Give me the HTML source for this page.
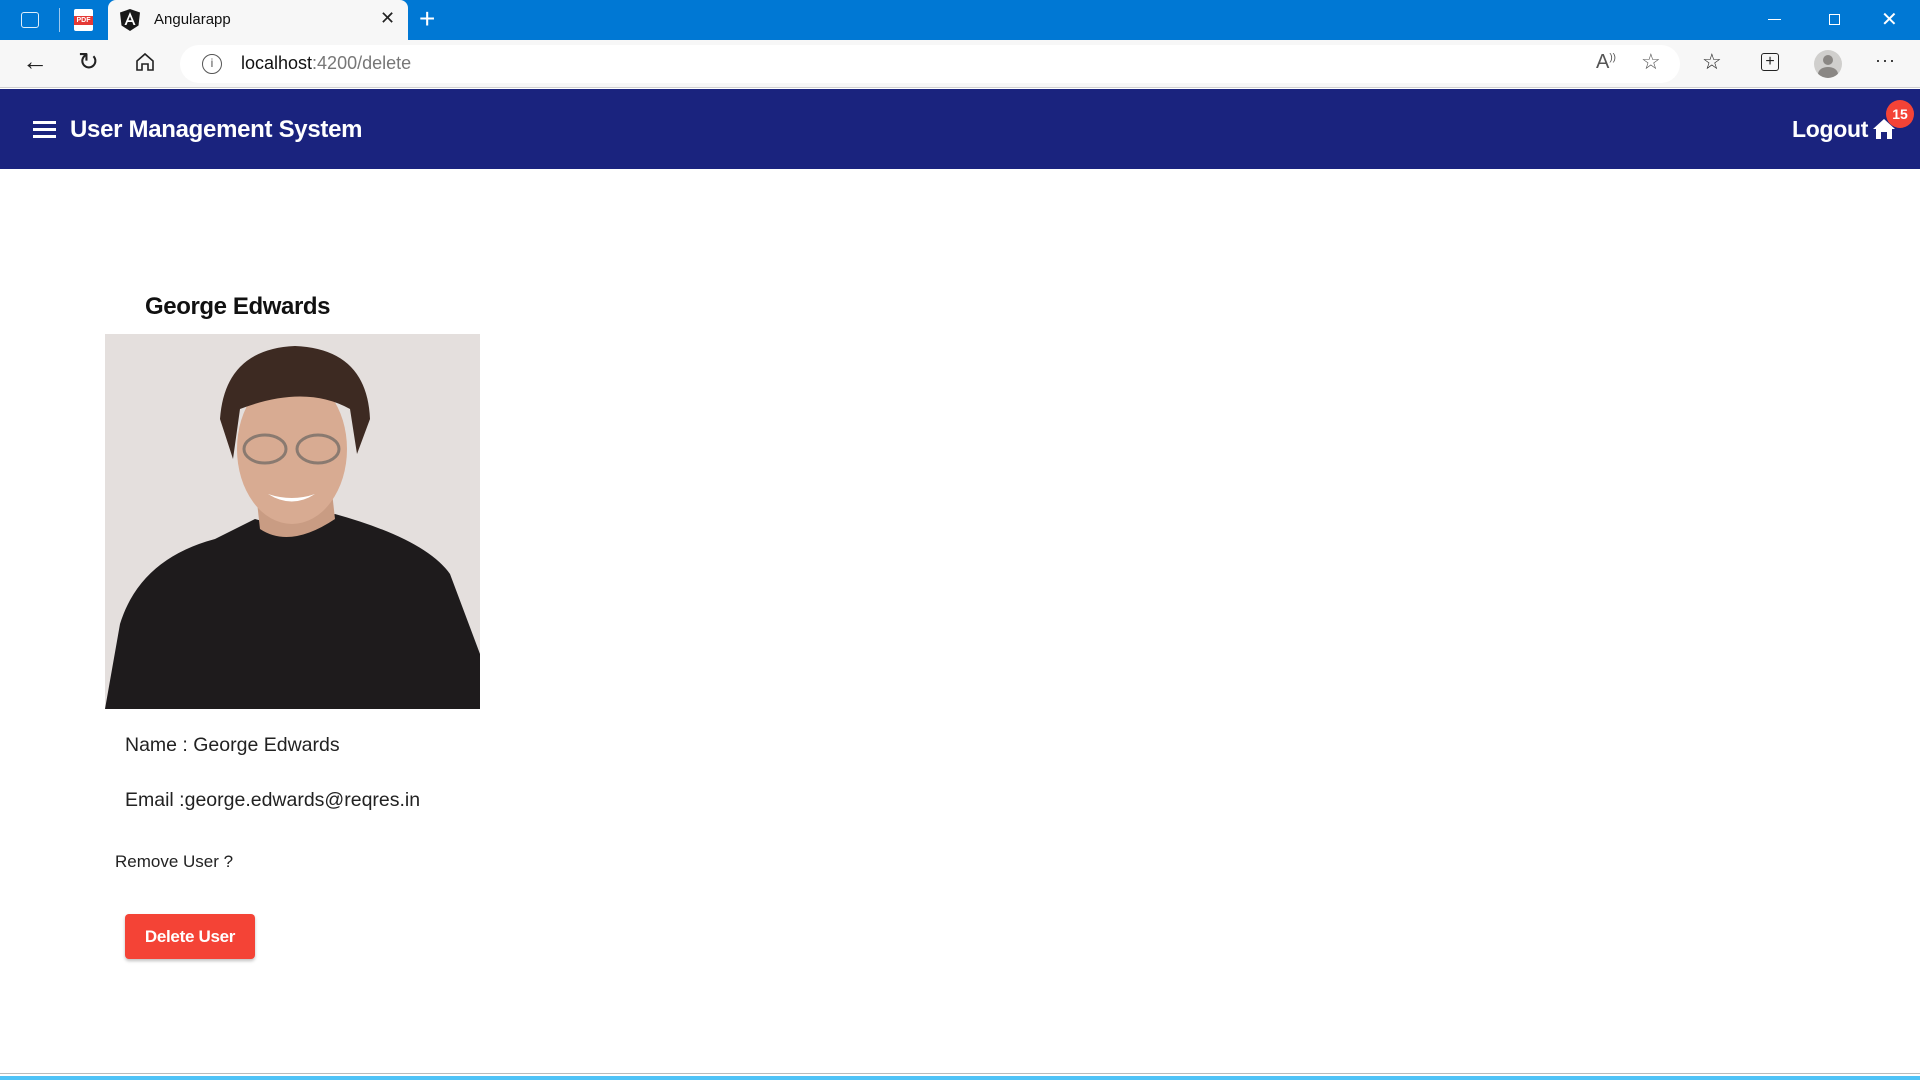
<!DOCTYPE html>
<html><head><meta charset="utf-8"><style>
*{margin:0;padding:0;box-sizing:border-box}
body{width:1920px;height:1080px;overflow:hidden;background:#fff;font-family:"Liberation Sans",sans-serif;position:relative}
.abs{position:absolute}
</style></head><body>
<div class="abs" style="left:0;top:0;width:1920px;height:40px;background:#0078d4"></div>
<div class="abs" style="left:21px;top:12px;width:18px;height:16px;border:1.5px solid #dfeefa;border-radius:3px"></div>
<div class="abs" style="left:59px;top:8px;width:1px;height:24px;background:#9cc8ee"></div>
<div class="abs" style="left:74px;top:9px;width:19px;height:22px;background:#fff;border-radius:2px"></div>
<div class="abs" style="left:74px;top:16px;width:19px;height:9px;background:#e53935;color:#fff;font-size:7px;font-weight:bold;text-align:center;line-height:9px">PDF</div>
<div class="abs" style="left:108px;top:0;width:300px;height:40px;background:#f7f7f7;border-radius:8px 8px 0 0"></div>
<svg class="abs" style="left:120px;top:9px" width="20" height="22" viewBox="0 0 20 22"><path d="M10 0 L20 3.5 L18.5 16.5 L10 22 L1.5 16.5 L0 3.5Z" fill="#1a1a1a"/><path d="M10 3 L15.5 16 H13.5 L12.3 13 H7.7 L6.5 16 H4.5Z M8.4 11.2 H11.6 L10 7.2Z" fill="#fff"/></svg>
<div class="abs" style="left:154px;top:11px;font-size:15px;color:#111">Angularapp</div>
<div class="abs" style="left:380px;top:8px;font-size:18px;color:#222">✕</div>
<div class="abs" style="left:419px;top:3px;font-size:28px;color:#fff;font-weight:300">+</div>
<div class="abs" style="left:1768px;top:19px;width:13px;height:1px;background:#fff"></div>
<div class="abs" style="left:1829px;top:14px;width:11px;height:11px;border:1px solid #fff"></div>
<div class="abs" style="left:1881px;top:7px;font-size:20px;color:#fff;font-weight:300">✕</div>
<div class="abs" style="left:0;top:40px;width:1920px;height:48px;background:#f7f7f7;border-bottom:1px solid #d0d0d0"></div>
<div class="abs" style="left:22px;top:46px;font-size:26px;color:#222">←</div>
<div class="abs" style="left:78px;top:47px;font-size:25px;color:#222">↻</div>
<svg class="abs" style="left:134px;top:51px" width="22" height="22" viewBox="0 0 22 22"><path d="M3 10 L11 3 L19 10 V19 H14 V13 H8 V19 H3Z" fill="none" stroke="#222" stroke-width="1.6"/></svg>
<div class="abs" style="left:180px;top:45px;width:1500px;height:38px;background:#fff;border-radius:19px"></div>
<div class="abs" style="left:202px;top:54px;width:20px;height:20px;border:1.5px solid #555;border-radius:50%;font-size:12px;text-align:center;line-height:17px;color:#555">i</div>
<div class="abs" style="left:241px;top:53px;font-size:18px;color:#111">localhost<span style="color:#777">:4200/delete</span></div>
<div class="abs" style="left:1596px;top:51px;font-size:20px;color:#555">A<sup style="font-size:10px">))</sup></div>
<div class="abs" style="left:1641px;top:49px;font-size:22px;color:#555">☆</div>
<div class="abs" style="left:1702px;top:49px;font-size:22px;color:#222">☆</div>
<div class="abs" style="left:1761px;top:53px;width:18px;height:18px;border:1.5px solid #222;border-radius:3px;font-size:16px;text-align:center;line-height:15px;color:#222">+</div>
<div class="abs" style="left:1814px;top:50px;width:28px;height:28px;border-radius:50%;background:#d0cfcd;overflow:hidden"><div class="abs" style="left:9px;top:5px;width:10px;height:10px;border-radius:50%;background:#8a8784"></div><div class="abs" style="left:4px;top:17px;width:20px;height:14px;border-radius:50%;background:#8a8784"></div></div>
<div class="abs" style="left:1875px;top:50px;font-size:18px;color:#222;letter-spacing:1px">···</div>
<div class="abs" style="left:0;top:89px;width:1920px;height:80px;background:#1a237e"></div>
<div class="abs" style="left:33px;top:121px;width:23px;height:3px;background:#fff;box-shadow:0 7px 0 #fff,0 14px 0 #fff"></div>
<div class="abs" style="left:70px;top:116px;font-size:24px;font-weight:bold;color:#fff;letter-spacing:-0.3px">User Management System</div>
<div class="abs" style="left:1792px;top:116px;font-size:23px;font-weight:bold;color:#fff;letter-spacing:-0.3px">Logout</div>
<svg class="abs" style="left:1872px;top:118px" width="24" height="22" viewBox="0 0 24 22"><path d="M12 1 L23 11 H20 V21 H15 V14 H9 V21 H4 V11 H1Z" fill="#fff"/></svg>
<div class="abs" style="left:1886px;top:100px;width:28px;height:28px;border-radius:50%;background:#f44336;color:#fff;font-size:14px;font-weight:bold;text-align:center;line-height:28px">15</div>
<div class="abs" style="left:145px;top:293px;font-size:24px;font-weight:bold;color:#111;letter-spacing:-0.4px">George Edwards</div>
<svg class="abs" style="left:105px;top:334px" width="375" height="375" viewBox="0 0 375 375">
<rect width="375" height="375" fill="#e4dfdd"/>
<path d="M0 375 L15 290 Q35 225 110 205 L150 185 L185 195 L230 180 Q320 205 345 240 L375 320 V375Z" fill="#1e1b1c"/>
<path d="M150 150 L155 195 Q185 215 230 185 L225 140Z" fill="#c99c83"/>
<ellipse cx="187" cy="115" rx="55" ry="75" fill="#d8ab92"/>
<path d="M115 85 Q120 15 190 12 Q262 15 265 85 L252 120 L245 75 Q200 50 135 75 L128 125Z" fill="#3d2a22"/>
<ellipse cx="160" cy="115" rx="21" ry="14" fill="none" stroke="#8a7a70" stroke-width="3"/>
<ellipse cx="213" cy="115" rx="21" ry="14" fill="none" stroke="#8a7a70" stroke-width="3"/>
<path d="M163 160 Q187 175 210 160 Q187 168 163 160Z" fill="#fff"/>
</svg>
<div class="abs" style="left:125px;top:734px;font-size:19.5px;color:#222">Name : George Edwards</div>
<div class="abs" style="left:125px;top:789px;font-size:19.5px;color:#222">Email :george.edwards@reqres.in</div>
<div class="abs" style="left:115px;top:852px;font-size:17px;color:#222">Remove User ?</div>
<div class="abs" style="left:125px;top:914px;width:130px;height:45px;background:#f44336;border-radius:4px;box-shadow:0 2px 3px rgba(0,0,0,.25);color:#fff;font-size:17px;font-weight:bold;text-align:center;line-height:45px;letter-spacing:-0.3px">Delete User</div>
<div class="abs" style="left:0;top:1073px;width:1920px;height:1px;background:#bbb"></div>
<div class="abs" style="left:0;top:1076px;width:1920px;height:4px;background:#4fc3f7"></div>
</body></html>
